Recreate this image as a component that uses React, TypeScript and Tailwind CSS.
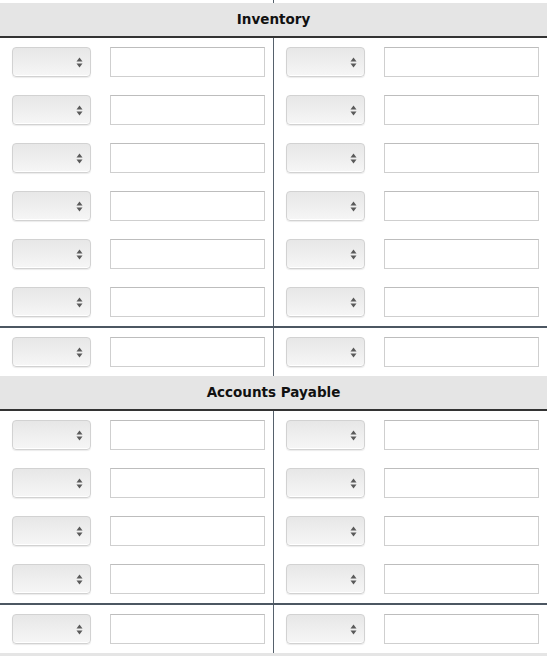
const font = { fontFamily: "'DejaVu Sans', Verdana, sans-serif" };

function Select() {
  return (
    <div className="relative h-[30px] w-[79px] shrink-0 rounded-[4px] border border-[#d2d2d2] bg-gradient-to-b from-[#e7e7e7] to-[#f6f6f6] shadow-[inset_0_-1px_0_#fff,0_1px_1px_rgba(0,0,0,0.08)]">
      <svg
        className="absolute right-[7px] top-[9px]"
        width="7"
        height="11"
        viewBox="0 0 7 11"
      >
        <path d="M3.5 0.5 L6.5 4.5 H0.5 Z" fill="#5a5a5a" />
        <path d="M3.5 10.5 L6.5 6.5 H0.5 Z" fill="#5a5a5a" />
      </svg>
    </div>
  );
}

function Input() {
  return (
    <div className="h-[30px] w-[155px] shrink-0 border border-[#cfcfcf] border-t-[#bdbdbd] bg-white" />
  );
}

function Cell({ left }: { left?: boolean }) {
  return (
    <div
      className={
        left
          ? "flex w-[274px] items-center gap-[19px] border-r border-[#56616c] py-[9px] pl-[12px] pr-[8px]"
          : "flex flex-1 items-center gap-[19px] py-[9px] pl-[12px] pr-[8px]"
      }
    >
      <Select />
      <Input />
    </div>
  );
}

function Row({ divided }: { divided?: boolean }) {
  return (
    <div className={divided ? "flex border-t-2 border-[#4c5762]" : "flex"}>
      <Cell left />
      <Cell />
    </div>
  );
}

function Section({ title, rows }: { title: string; rows: number }) {
  return (
    <div>
      <div className="flex h-[35px] items-center justify-center border-b-2 border-[#333] bg-[#e5e5e5] text-[13.5px] font-bold text-[#111]">
        {title}
      </div>
      {Array.from({ length: rows }).map((_, i) => (
        <Row key={i} />
      ))}
      <Row divided />
    </div>
  );
}

export default function App() {
  return (
    <div className="h-[656px] w-[560px] overflow-hidden bg-white" style={font}>
      <div className="w-[547px]">
        <div className="flex h-[3px]">
          <div className="w-[274px] border-r border-[#56616c]" />
        </div>
        <Section title="Inventory" rows={6} />
        <Section title="Accounts Payable" rows={4} />
        <div className="h-[10px] bg-[#e5e5e5]" />
      </div>
    </div>
  );
}
